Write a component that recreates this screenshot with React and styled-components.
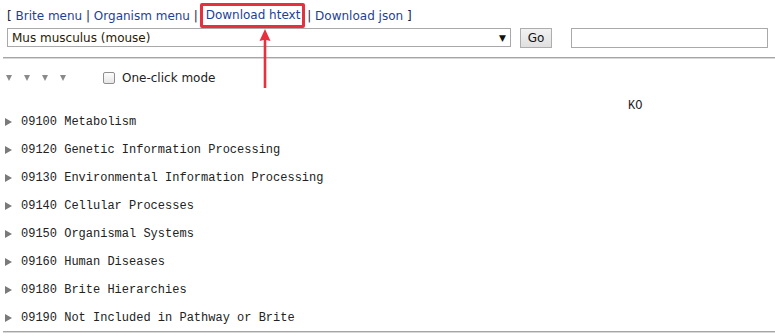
import React from "react";
import styled, { createGlobalStyle } from "styled-components";

const GlobalStyle = createGlobalStyle`
  html, body {
    margin: 0;
    padding: 0;
    background: #fff;
  }
  body {
    font-family: "DejaVu Sans", Verdana, sans-serif;
    font-size: 12px;
    color: #222;
  }
`;

const Page = styled.div`
  position: relative;
  width: 775px;
  height: 336px;
  overflow: hidden;
`;

const Top = styled.div`
  padding: 4px 7px 0 7px;
`;

const LinkBar = styled.div`
  display: flex;
  align-items: center;
  height: 23px;
  white-space: pre;
`;

const Bracket = styled.span`
  color: #1a1a4a;
`;

const Link = styled.a`
  color: #1d3f96;
  text-decoration: none;
  cursor: pointer;
  ${(p) =>
    p.$marked &&
    `
    display: inline-block;
    line-height: 19px;
    padding: 0 2px 0 3px;
    border: 3px solid #e8303c;
    border-radius: 2px;
    margin: 0 -2px;
    position: relative;
  `}
`;

const Controls = styled.div`
  display: flex;
  align-items: center;
  height: 21px;
`;

const SelectBox = styled.div`
  box-sizing: border-box;
  width: 504px;
  height: 19px;
  border: 1px solid #a9a9a9;
  display: flex;
  align-items: center;
  justify-content: space-between;
  padding: 0 4px 0 4px;
  color: #2a1a00;
  font-size: 12px;
`;

const Caret = styled.span`
  font-size: 9px;
  color: #111;
`;

const GoButton = styled.button`
  box-sizing: border-box;
  margin-left: 9px;
  width: 32px;
  height: 20px;
  padding: 0;
  border: 1px solid #adadad;
  background: linear-gradient(#f2f2f2, #e0e0e0);
  font-family: "DejaVu Sans", Verdana, sans-serif;
  font-size: 12px;
  color: #111;
`;

const SearchInput = styled.input`
  box-sizing: border-box;
  margin-left: 19px;
  width: 197px;
  height: 20px;
  border: 1px solid #a9a9a9;
  padding: 0 3px;
`;

const Rule = styled.div`
  margin: 9px 0 0 3px;
  height: 0;
  border-top: 1px solid #a6a6a6;
  border-bottom: 1px solid #d8d8d8;
`;

const Options = styled.div`
  display: flex;
  align-items: center;
  height: 37px;
  padding-left: 6px;
`;

const LevelToggle = styled.span`
  width: 0;
  height: 0;
  border-left: 3.5px solid transparent;
  border-right: 3.5px solid transparent;
  border-top: 6px solid #8a8a8a;
  margin-right: 12px;
`;

const CheckLabel = styled.label`
  display: flex;
  align-items: center;
  margin-left: 25px;
  gap: 7px;
  font-size: 12px;
  color: #222;
`;

const Check = styled.span`
  box-sizing: border-box;
  width: 12px;
  height: 12px;
  border: 1px solid #8f8f8f;
  border-radius: 2px;
  background: linear-gradient(#fdfdfd, #e6e6e6);
`;

const ColumnHead = styled.div`
  padding: 4px 0 0 628px;
  height: 12px;
  margin-bottom: -4px;
  line-height: 12px;
  font-family: "Liberation Mono", "Courier New", monospace;
  font-size: 12px;
  color: #222;
`;

const Tree = styled.div`
  display: flex;
  flex-direction: column;
`;

const Node = styled.div`
  display: flex;
  align-items: center;
  height: 28px;
  padding-left: 5px;
  font-family: "Liberation Mono", "Courier New", monospace;
  font-size: 12px;
  color: #222;
  white-space: pre;
`;

const Expander = styled.span`
  width: 0;
  height: 0;
  border-top: 4px solid transparent;
  border-bottom: 4px solid transparent;
  border-left: 7px solid #7a7a7a;
  margin-right: 9px;
`;

const BottomRule = styled(Rule)`
  margin-top: -1px;
`;

const Arrow = styled.svg`
  position: absolute;
  left: 257px;
  top: 28px;
`;

const nodes = [
  "09100 Metabolism",
  "09120 Genetic Information Processing",
  "09130 Environmental Information Processing",
  "09140 Cellular Processes",
  "09150 Organismal Systems",
  "09160 Human Diseases",
  "09180 Brite Hierarchies",
  "09190 Not Included in Pathway or Brite",
];

export default function App() {
  return (
    <Page>
      <GlobalStyle />
      <Top>
        <LinkBar>
          <Bracket>[ </Bracket>
          <Link>Brite menu</Link>
          <Bracket> | </Bracket>
          <Link>Organism menu</Link>
          <Bracket> | </Bracket>
          <Link $marked>Download htext</Link>
          <Bracket> | </Bracket>
          <Link>Download json</Link>
          <Bracket> ]</Bracket>
        </LinkBar>
        <Controls>
          <SelectBox>
            <span>Mus musculus (mouse)</span>
            <Caret>▼</Caret>
          </SelectBox>
          <GoButton>Go</GoButton>
          <SearchInput />
        </Controls>
      </Top>
      <Rule />
      <Options>
        <LevelToggle />
        <LevelToggle />
        <LevelToggle />
        <LevelToggle />
        <CheckLabel>
          <Check />
          One-click mode
        </CheckLabel>
      </Options>
      <ColumnHead>KO</ColumnHead>
      <Tree>
        {nodes.map((n) => (
          <Node key={n}>
            <Expander />
            {n}
          </Node>
        ))}
      </Tree>
      <BottomRule />
      <Arrow width="16" height="62" viewBox="0 0 16 62">
        <path d="M8 1 L13.5 13 L9.3 12 L9.3 60 L6.7 60 L6.7 12 L2.5 13 Z" fill="#e8303c" />
      </Arrow>
    </Page>
  );
}
